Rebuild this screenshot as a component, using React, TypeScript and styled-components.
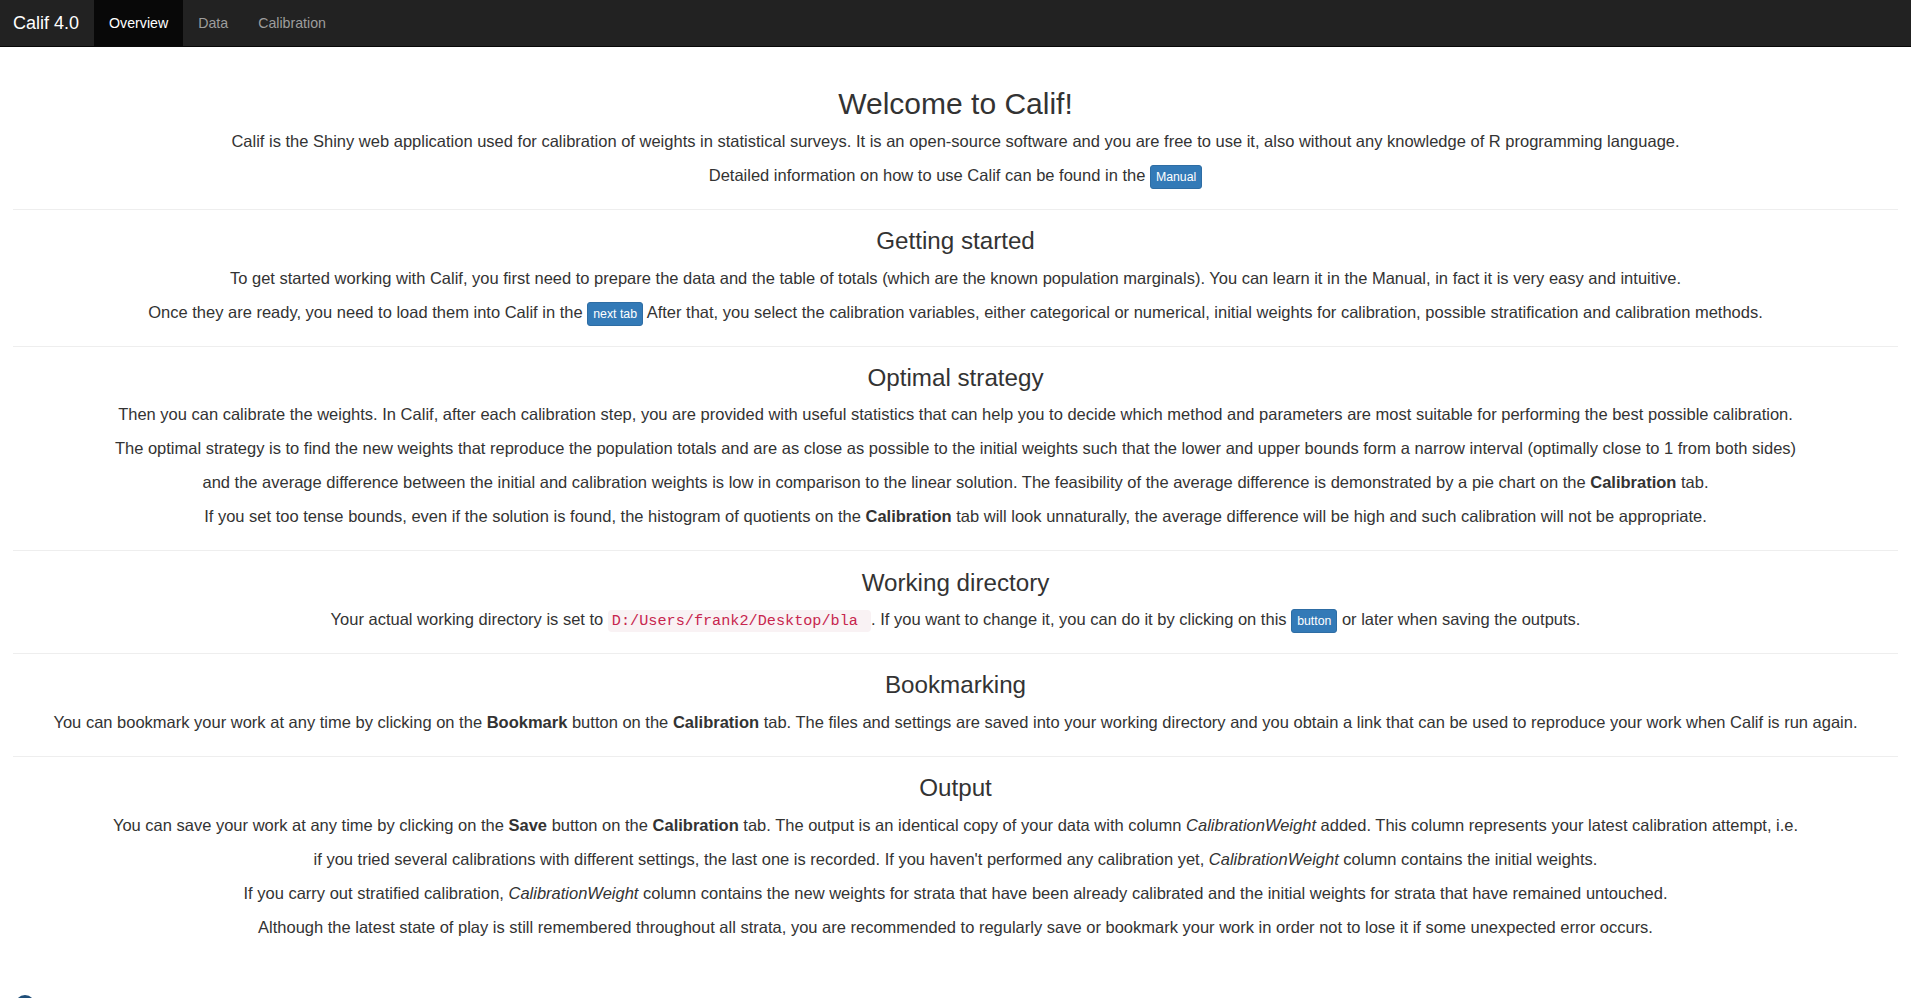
import React from "react";
import styled, { createGlobalStyle } from "styled-components";

const GlobalStyle = createGlobalStyle`
  html, body {
    margin: 0;
    padding: 0;
    overflow: hidden;
    background: #ffffff;
  }
  body {
    font-family: "Liberation Sans", Arial, Helvetica, sans-serif;
    font-size: 16.5px;
    color: #333333;
  }
  * { box-sizing: border-box; }
`;

const Navbar = styled.nav`
  display: flex;
  align-items: stretch;
  height: 47px;
  background: #222222;
  border-bottom: 1px solid #080808;
`;

const Brand = styled.div`
  display: flex;
  align-items: center;
  padding: 0 15px 0 13px;
  font-size: 18px;
  color: #ffffff;
`;

const NavList = styled.ul`
  display: flex;
  margin: 0;
  padding: 0;
  list-style: none;
`;

const NavItem = styled.li<{ $active?: boolean }>`
  display: flex;
  align-items: center;
  padding: 0 15px;
  font-size: 14.2px;
  color: ${(p) => (p.$active ? "#ffffff" : "#9d9d9d")};
  background: ${(p) => (p.$active ? "#080808" : "transparent")};
  cursor: pointer;
`;

const Content = styled.main`
  padding: 40px 13px 0;
  text-align: center;
`;

const Section = styled.section<{ $titleGap?: number }>`
  display: flex;
  flex-direction: column;
  align-items: center;
  gap: 10px;
  & > h2,
  & > h3 {
    margin-bottom: ${(p) => (p.$titleGap ?? 11) - 10}px;
  }
`;

const Title = styled.h2`
  margin: 0;
  font-size: 30px;
  font-weight: 500;
  line-height: 1.1;
  color: #333333;
`;

const Heading = styled.h3`
  margin: 0;
  font-size: 24.2px;
  font-weight: 500;
  line-height: 26.4px;
  color: #333333;
`;

const Line = styled.p`
  margin: 0;
  height: 24px;
  line-height: 24px;
  white-space: nowrap;
`;

const Divider = styled.hr`
  margin: 22px 0 18.3px;
  height: 0;
  border: 0;
  border-top: 1px solid #eeeeee;
`;

const SmallButton = styled.button`
  display: inline-block;
  margin: 0;
  padding: 1px 5px;
  font-family: "Liberation Sans", Arial, sans-serif;
  font-size: 12.3px;
  line-height: 20px;
  color: #ffffff;
  background: #337ab7;
  border: 1px solid #2e6da4;
  border-radius: 3px;
  vertical-align: baseline;
  cursor: pointer;
`;

const Code = styled.code`
  padding: 2px 4px;
  font-family: "Liberation Mono", "Courier New", monospace;
  font-size: 15.2px;
  line-height: 1;
  color: #c7254e;
  background: #f9f2f4;
  border-radius: 4px;
  white-space: pre;
`;

const Footer = styled.div`
  padding: 56px 15px 0;
  display: flex;
`;

const Logo = styled.div`
  width: 20px;
  height: 20px;
  border-radius: 50%;
  background: #1f4e79;
`;

export default function App() {
  return (
    <>
      <GlobalStyle />
      <Navbar>
        <Brand>Calif 4.0</Brand>
        <NavList>
          <NavItem $active>Overview</NavItem>
          <NavItem>Data</NavItem>
          <NavItem>Calibration</NavItem>
        </NavList>
      </Navbar>
      <Content>
        <Section $titleGap={9}>
          <Title>Welcome to Calif!</Title>
          <Line>
            Calif is the Shiny web application used for calibration of weights in statistical surveys. It is an
            open-source software and you are free to use it, also without any knowledge of R programming language.
          </Line>
          <Line>
            Detailed information on how to use Calif can be found in the <SmallButton>Manual</SmallButton>
          </Line>
        </Section>
        <Divider />
        <Section>
          <Heading>Getting started</Heading>
          <Line>
            To get started working with Calif, you first need to prepare the data and the table of totals (which are
            the known population marginals). You can learn it in the Manual, in fact it is very easy and intuitive.
          </Line>
          <Line>
            Once they are ready, you need to load them into Calif in the <SmallButton>next tab</SmallButton> After
            that, you select the calibration variables, either categorical or numerical, initial weights for
            calibration, possible stratification and calibration methods.
          </Line>
        </Section>
        <Divider />
        <Section>
          <Heading>Optimal strategy</Heading>
          <Line>
            Then you can calibrate the weights. In Calif, after each calibration step, you are provided with useful
            statistics that can help you to decide which method and parameters are most suitable for performing the
            best possible calibration.
          </Line>
          <Line>
            The optimal strategy is to find the new weights that reproduce the population totals and are as close as
            possible to the initial weights such that the lower and upper bounds form a narrow interval (optimally
            close to 1 from both sides)
          </Line>
          <Line>
            and the average difference between the initial and calibration weights is low in comparison to the linear
            solution. The feasibility of the average difference is demonstrated by a pie chart on the{" "}
            <b>Calibration</b> tab.
          </Line>
          <Line>
            If you set too tense bounds, even if the solution is found, the histogram of quotients on the{" "}
            <b>Calibration</b> tab will look unnaturally, the average difference will be high and such calibration
            will not be appropriate.
          </Line>
        </Section>
        <Divider />
        <Section>
          <Heading>Working directory</Heading>
          <Line>
            Your actual working directory is set to <Code>D:/Users/frank2/Desktop/bla </Code>. If you want to change
            it, you can do it by clicking on this <SmallButton>button</SmallButton> or later when saving the outputs.
          </Line>
        </Section>
        <Divider />
        <Section>
          <Heading>Bookmarking</Heading>
          <Line>
            You can bookmark your work at any time by clicking on the <b>Bookmark</b> button on the{" "}
            <b>Calibration</b> tab. The files and settings are saved into your working directory and you obtain a link
            that can be used to reproduce your work when Calif is run again.
          </Line>
        </Section>
        <Divider />
        <Section>
          <Heading>Output</Heading>
          <Line>
            You can save your work at any time by clicking on the <b>Save</b> button on the <b>Calibration</b> tab.
            The output is an identical copy of your data with column <i>CalibrationWeight</i> added. This column
            represents your latest calibration attempt, i.e.
          </Line>
          <Line>
            if you tried several calibrations with different settings, the last one is recorded. If you haven't
            performed any calibration yet, <i>CalibrationWeight</i> column contains the initial weights.
          </Line>
          <Line>
            If you carry out stratified calibration, <i>CalibrationWeight</i> column contains the new weights for
            strata that have been already calibrated and the initial weights for strata that have remained untouched.
          </Line>
          <Line>
            Although the latest state of play is still remembered throughout all strata, you are recommended to
            regularly save or bookmark your work in order not to lose it if some unexpected error occurs.
          </Line>
        </Section>
      </Content>
      <Footer>
        <Logo />
      </Footer>
    </>
  );
}
